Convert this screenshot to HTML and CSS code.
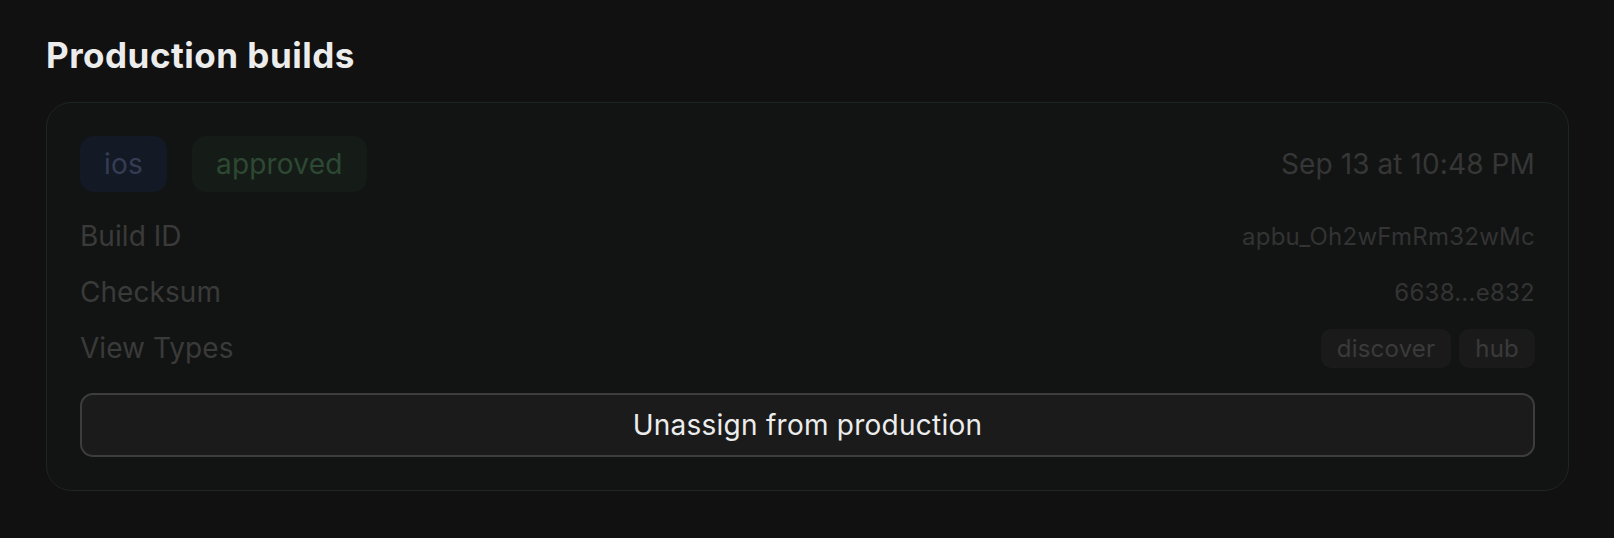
FILE: index.html
```html
<!DOCTYPE html>
<html lang="en">
<head>
<meta charset="utf-8">
<title>Production builds</title>
<link rel="stylesheet" href="styles.css">
</head>
<body>
<main class="page">
  <h1 class="title">Production builds</h1>
  <section class="card">
    <div class="card-head">
      <div class="badges">
        <span class="badge badge-ios">ios</span>
        <span class="badge badge-approved">approved</span>
      </div>
      <span class="date">Sep 13 at 10:48 PM</span>
    </div>
    <div class="details">
      <div class="row">
        <span class="label">Build ID</span>
        <span class="value">apbu_Oh2wFmRm32wMc</span>
      </div>
      <div class="row">
        <span class="label">Checksum</span>
        <span class="value">6638...e832</span>
      </div>
      <div class="row">
        <span class="label">View Types</span>
        <span class="chips">
          <span class="chip">discover</span>
          <span class="chip">hub</span>
        </span>
      </div>
    </div>
    <button class="btn" type="button">Unassign from production</button>
  </section>
</main>
</body>
</html>
```

FILE: styles.css
```css
html, body {
  margin: 0;
  padding: 0;
  background: #111111;
}

body {
  font-family: Inter, "Noto Sans", "Liberation Sans", sans-serif;
  color: #ececec;
  -webkit-font-smoothing: antialiased;
}

.page {
  padding: 34px 45px 0 46px;
  display: flex;
  flex-direction: column;
}

.title {
  margin: 0;
  font-size: 35px;
  line-height: 42px;
  font-weight: 700;
  color: #ececec;
  letter-spacing: 0.5px;
}

.card {
  margin-top: 26px;
  border: 1px solid #1e2620;
  border-radius: 25px;
  background: #121413;
  padding: 33px;
  display: flex;
  flex-direction: column;
}

.card-head {
  display: flex;
  align-items: center;
  justify-content: space-between;
  height: 56px;
}

.badges {
  display: flex;
  gap: 25px;
}

.badge {
  display: inline-flex;
  align-items: center;
  height: 56px;
  padding: 0 24px;
  border-radius: 14px;
  font-size: 28px;
  letter-spacing: 0.2px;
}

.badge-ios {
  background: #131925;
  color: #343d53;
}

.badge-approved {
  background: #151c17;
  color: #2d4933;
}

.date {
  font-size: 28px;
  color: #363636;
  letter-spacing: 0.1px;
}

.details {
  margin-top: 24px;
  display: flex;
  flex-direction: column;
  gap: 16px;
}

.row {
  display: flex;
  align-items: center;
  justify-content: space-between;
  height: 40px;
}

.label {
  font-size: 28px;
  color: #3a3a3a;
  letter-spacing: 0.05px;
}

.value {
  font-size: 24px;
  color: #333333;
  letter-spacing: 0.25px;
}

.chips {
  display: flex;
  gap: 8px;
}

.chip {
  display: inline-flex;
  align-items: center;
  height: 39px;
  padding: 0 16px;
  border-radius: 10px;
  background: #1a1a1a;
  font-size: 24px;
  color: #3a3a3a;
  letter-spacing: 0.2px;
}

.btn {
  margin-top: 25px;
  height: 64px;
  border: 2px solid #3d3d3d;
  border-radius: 13px;
  background: #1b1b1b;
  color: #ececec;
  font-family: inherit;
  font-size: 28px;
  letter-spacing: 0.25px;
  cursor: pointer;
}
```
